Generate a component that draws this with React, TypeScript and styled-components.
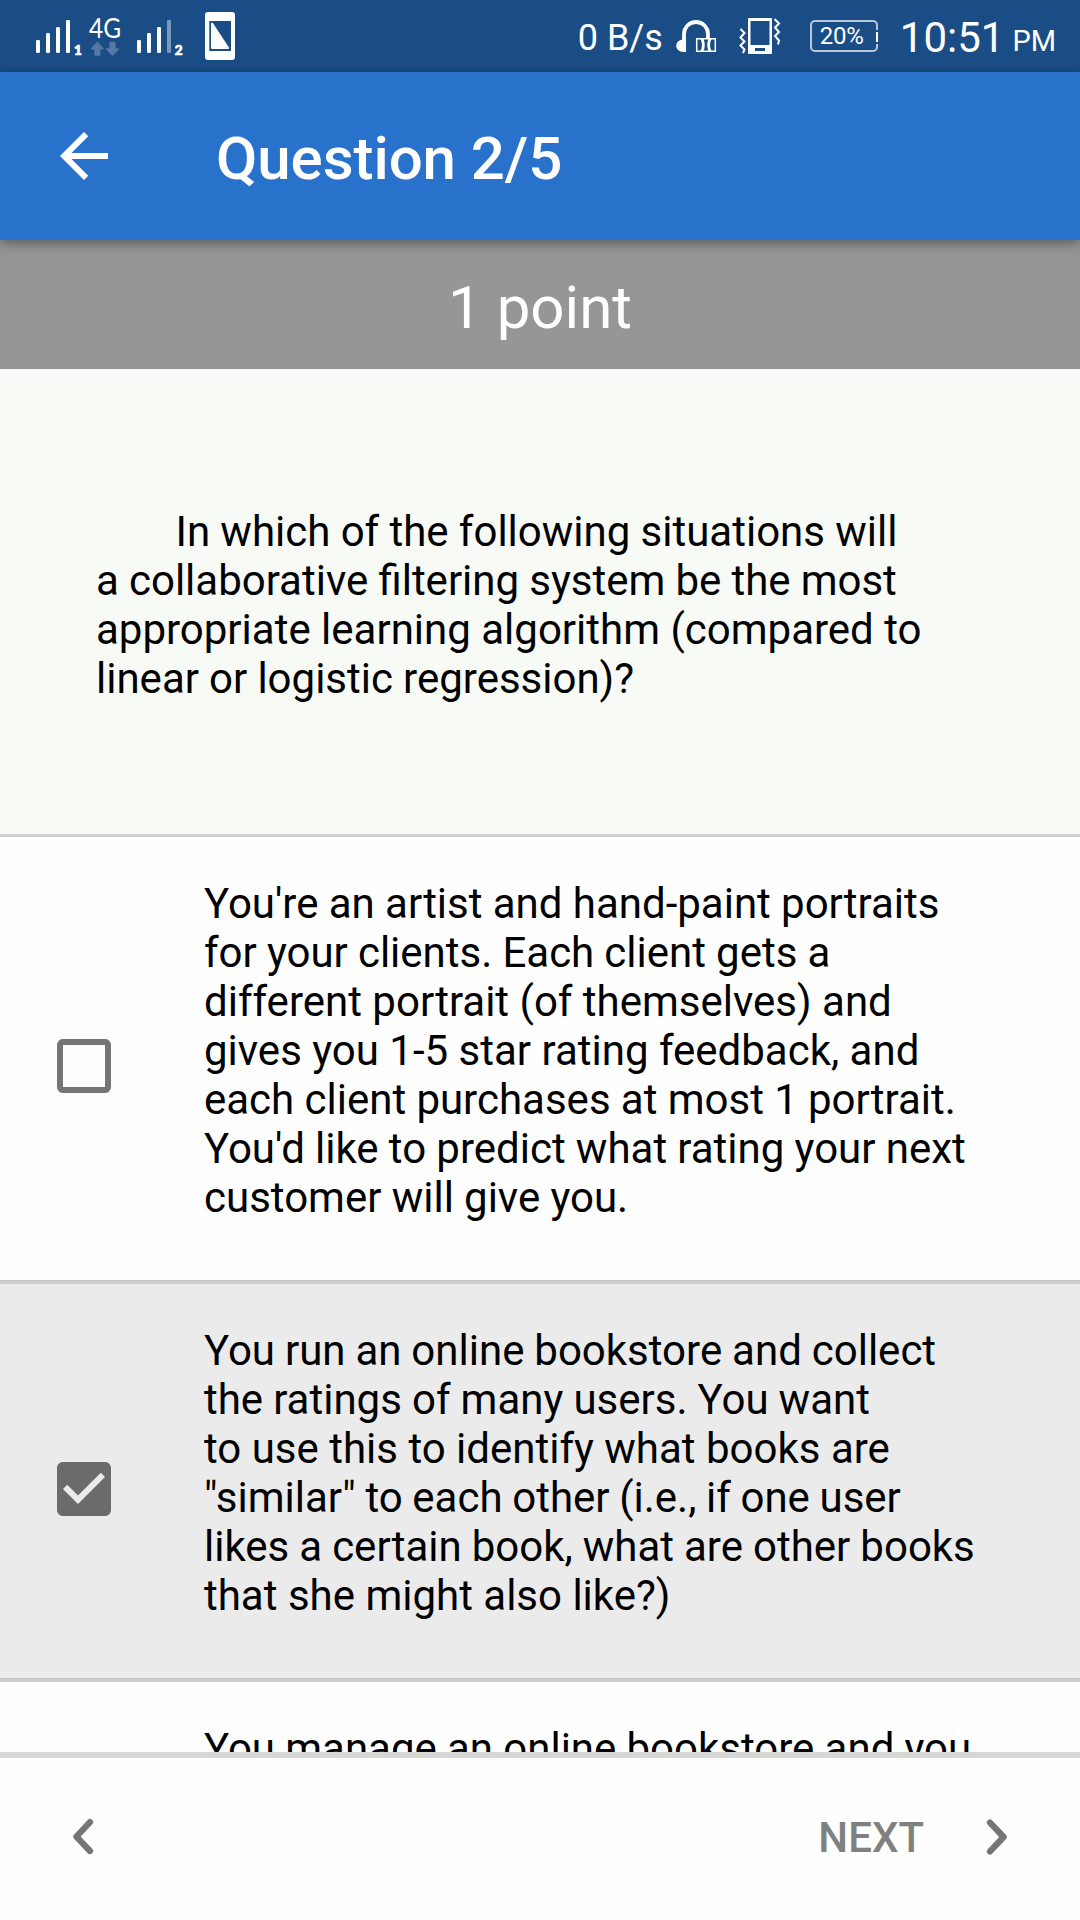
import React from "react";
import styled, { createGlobalStyle } from "styled-components";

const GlobalStyle = createGlobalStyle`
  * { box-sizing: border-box; }
  body { margin: 0; background: #fefefe; font-family: Roboto, "Liberation Sans", sans-serif; }
  svg { display: block; flex: none; }
`;

const Screen = styled.div`
  width: 1080px;
  height: 1920px;
  display: flex;
  flex-direction: column;
  overflow: hidden;
`;

const StatusBar = styled.div`
  flex: none;
  height: 72px;
  background: #1a4d85;
  color: #fff;
  display: flex;
  justify-content: space-between;
`;

const StatusGroup = styled.div`
  display: flex;
  height: 72px;
  padding-right: 24px;
`;

const StatusIcons = styled.div`
  display: flex;
  gap: 20px;
  margin-left: 11px;
`;

const StatusText = styled.span<{ $size: number; $top: number; $left?: number }>`
  font-size: ${(p) => p.$size}px;
  line-height: ${(p) => p.$size}px;
  margin-top: ${(p) => p.$top}px;
  margin-left: ${(p) => p.$left ?? 0}px;
  white-space: nowrap;
`;

const Battery = styled.div`
  width: 68px;
  height: 32px;
  margin: 20px 0 0 28px;
  border: 2px solid #b5c7da;
  border-radius: 5px;
  padding-left: 8px;
  font-size: 24px;
  line-height: 29px;
  letter-spacing: -0.2px;
  position: relative;
`;

const BatteryTip = styled.i`
  position: absolute;
  right: -2px;
  top: 8px;
  width: 2px;
  height: 10px;
  background: #fff;
  border: solid #1a4d85;
  border-width: 2px 0;
  box-sizing: content-box;
`;

const AppBar = styled.header`
  flex: none;
  height: 168px;
  padding-left: 48px;
  background: #2872cb;
  color: #fff;
  display: flex;
  align-items: center;
  position: relative;
  box-shadow: 0 3px 12px rgba(0, 0, 0, 0.42);
`;

const Title = styled.h1`
  margin: 5px 0 0 96px;
  font-size: 60px;
  line-height: 70px;
  font-weight: 500;
  letter-spacing: -0.06px;
`;

const Points = styled.div`
  flex: none;
  height: 129px;
  padding-top: 33px;
  background: #969696;
  color: #fff;
  font-size: 60px;
  line-height: 70px;
  text-align: center;
`;

const Content = styled.main`
  flex: 1;
  min-height: 0;
  overflow: hidden;
  color: #000;
  font-size: 42px;
  line-height: 49px;
`;

const Question = styled.section`
  height: 468px;
  padding: 138px 0 0 96px;
  background: #f8faf6;
  border-bottom: 3px solid #d0d0d0;
`;

const Line = styled.div<{ $gap?: number; $indent?: number }>`
  white-space: nowrap;
  word-spacing: ${(p) => p.$gap ?? 0}px;
  padding-left: ${(p) => p.$indent ?? 0}px;
`;

const Option = styled.div<{ $checked?: boolean }>`
  display: flex;
  align-items: center;
  padding-left: 48px;
  background: ${(p) => (p.$checked ? "#ebebeb" : "#fefefe")};
  border-bottom: 3px solid #cecece;
  box-shadow: 0 1px 0 #b9b9b9 inset, inset 0 0 0 #000;
  box-shadow: inset 0 -1px #c4c4c4;
`;

const OptionText = styled.div<{ $alone?: boolean }>`
  padding: 42px 0 59px ${(p) => (p.$alone ? 156 : 84)}px;
`;

const CheckIcon = styled.svg`
  width: 72px;
  height: 72px;
  margin-top: 14px;
`;

const Footer = styled.footer`
  flex: none;
  height: 168px;
  border-top: 6px solid #d7d8d5;
  background: #fefefe;
  padding: 0 63px 5px;
  display: flex;
  align-items: center;
  justify-content: space-between;
`;

const NextButton = styled.div`
  display: flex;
  align-items: center;
  gap: 53px;
  color: #808080;
  font-size: 42px;
  line-height: 49px;
  font-weight: 500;
`;

const NextLabel = styled.span`
  padding-top: 1px;
`;

function SignalIcons() {
  return (
    <svg width="240" height="72" viewBox="0 0 240 72" fill="#fff">
      <rect x="36" y="40" width="4" height="13" rx="1.2" />
      <rect x="46" y="33" width="4" height="20" rx="1.2" />
      <rect x="56" y="27" width="4" height="26" rx="1.2" />
      <rect x="66" y="20" width="4" height="33" rx="1.2" />
      <text x="74" y="55" fontSize="13.5" fontWeight="900" fontFamily="Lato" stroke="#fff" strokeWidth="0.7">1</text>
      <text x="89" y="37.5" fontSize="27" fontFamily="Lato" textLength="32" lengthAdjust="spacingAndGlyphs">4G</text>
      <g fill="#5479a4" stroke="#5479a4" strokeWidth="1.5" strokeLinejoin="round">
        <path d="M97.3 42.5l-5.6 6.2h3.3V55h4.6v-6.3h3.3z" />
        <path d="M112.5 55l-5.8-6h3.5v-6.5h4.6V49h3.5z" />
      </g>
      <rect x="137" y="40" width="4" height="13" rx="1.2" />
      <rect x="147" y="33" width="4" height="20" rx="1.2" />
      <rect x="157" y="27" width="4" height="26" rx="1.2" />
      <rect x="167" y="20" width="4" height="33" rx="1.2" fill="#7c99ba" />
      <text x="174.8" y="55" fontSize="13.5" fontWeight="900" fontFamily="Lato" stroke="#fff" strokeWidth="0.7">2</text>
      <path
        fillRule="evenodd"
        d="M208 12h24q3 0 3 3v42q0 3-3 3h-24q-3 0-3-3V15q0-3 3-3zM209.3 21v30H231V21z"
      />
      <path d="M211 23.2q.8-1.6 2 0L229 47.5q.6 1.5-1 1.5h-15.5q-1.5 0-1.5-1.5z" />
    </svg>
  );
}

function HeadsetIcon() {
  return (
    <svg width="44" height="72" viewBox="675 0 44 72">
      <path d="M685 42V34a12 12 0 0 1 24 0v4" fill="none" stroke="#fff" strokeWidth="3.8" />
      <path d="M687 38v14h-2.500a7.300 6.200 0 0 1 0-12.500z" fill="#fff" />
      <path d="M697.700 38.700h18.600v12.600h-18.600z" fill="#1a4d85" stroke="#fff" strokeWidth="1.500" />
      <path d="M701.500 39h3q2.600 6 0 12h-3q3-6 0-12zM712.500 39h-3q-2.600 6 0 12h3q-3-6 0-12z" fill="#fff" />
    </svg>
  );
}

function VibrateIcon() {
  return (
    <svg width="44" height="72" viewBox="739 0 44 72">
      <path fillRule="evenodd" fill="#fff" d="M750 18h22q1 0 1 1v34q0 1-1 1h-22q-1 0-1-1V19q0-1 1-1zM751.500 21v24h19V21zM756 48v3h10v-3z" />
      <path d="M741.500 29l4 4-4 4.500 4 4-4 4 4 4-1.500 3.500" fill="none" stroke="#fff" strokeWidth="2" />
      <path d="M775.500 19l4.500 4.500-4 4 4 4.500-4 4 4 4.500-1 4" fill="none" stroke="#fff" strokeWidth="2" />
    </svg>
  );
}

function Checkbox({ checked }: { checked?: boolean }) {
  return (
    <CheckIcon viewBox="0 0 24 24" fill={checked ? "#6b6b6b" : "#757575"}>
      {checked ? (
        <path d="M19 3H5c-1.110 0-2 .9-2 2v14c0 1.100.89 2 2 2h14c1.110 0 2-.9 2-2V5c0-1.100-.89-2-2-2zm-9 14l-5-5 1.410-1.410L10 14.170l7.590-7.590L19 8l-9 9z" />
      ) : (
        <path d="M19 5v14H5V5h14m0-2H5c-1.100 0-2 .9-2 2v14c0 1.100.9 2 2 2h14c1.100 0 2-.9 2-2V5c0-1.100-.9-2-2-2z" />
      )}
    </CheckIcon>
  );
}

function Chevron({ flip }: { flip?: boolean }) {
  return (
    <svg width="40" height="50" viewBox="0 0 40 50">
      <path
        d={flip ? "M13 10.600L26.600 25L13 39.400" : "M27 10.200L13.400 24.600L27 39"}
        fill="none"
        stroke="#757575"
        strokeWidth="6.300"
        strokeLinecap="round"
        strokeLinejoin="round"
      />
    </svg>
  );
}

type TextLine = [text: string, gap: number];

const question: TextLine[] = [
  ["In which of the following situations will", -0.17],
  ["a collaborative filtering system be the most", -0.3],
  ["appropriate learning algorithm (compared to", 0],
  ["linear or logistic regression)?", -0.3],
];

const options: { checked: boolean; lines: TextLine[] }[] = [
  {
    checked: false,
    lines: [
      ["You're an artist and hand-paint portraits", -0.15],
      ["for your clients. Each client gets a", -0.3],
      ["different portrait (of themselves) and", 0],
      ["gives you 1-5 star rating feedback, and", 0],
      ["each client purchases at most 1 portrait.", -0.15],
      ["You'd like to predict what rating your next", -0.2],
      ["customer will give you.", -0.2],
    ],
  },
  {
    checked: true,
    lines: [
      ["You run an online bookstore and collect", -0.5],
      ["the ratings of many users. You want", -0.35],
      ["to use this to identify what books are", 0],
      ['"similar" to each other (i.e., if one user', -0.8],
      ["likes a certain book, what are other books", -0.4],
      ["that she might also like?)", 0],
    ],
  },
];

export default function App() {
  return (
    <Screen>
      <GlobalStyle />
      <StatusBar>
        <SignalIcons />
        <StatusGroup>
          <StatusText $size={36} $top={20}>0 B/s</StatusText>
          <StatusIcons>
            <HeadsetIcon />
            <VibrateIcon />
          </StatusIcons>
          <Battery>
            20%
            <BatteryTip />
          </Battery>
          <StatusText $size={42} $top={17} $left={22}>10:51</StatusText>
          <StatusText $size={29} $top={27} $left={8}>PM</StatusText>
        </StatusGroup>
      </StatusBar>
      <AppBar>
        <svg width="72" height="72" viewBox="0 0 24 24" fill="#fff">
          <path d="M20 11H7.830l5.590-5.590L12 4l-8 8 8 8 1.410-1.410L7.830 13H20v-2z" />
        </svg>
        <Title>Question 2/5</Title>
      </AppBar>
      <Points>1 point</Points>
      <Content>
        <Question>
          {question.map(([text, gap], i) => (
            <Line key={text} $gap={gap} $indent={i === 0 ? 79.5 : 0}>
              {text}
            </Line>
          ))}
        </Question>
        {options.map((o, i) => (
          <Option key={i} $checked={o.checked}>
            <Checkbox checked={o.checked} />
            <OptionText>
              {o.lines.map(([text, gap]) => (
                <Line key={text} $gap={gap}>
                  {text}
                </Line>
              ))}
            </OptionText>
          </Option>
        ))}
        <Option>
          <OptionText $alone>
            <Line $gap={-0.2}>You manage an online bookstore and you</Line>
          </OptionText>
        </Option>
      </Content>
      <Footer>
        <Chevron />
        <NextButton>
          <NextLabel>NEXT</NextLabel>
          <Chevron flip />
        </NextButton>
      </Footer>
    </Screen>
  );
}
